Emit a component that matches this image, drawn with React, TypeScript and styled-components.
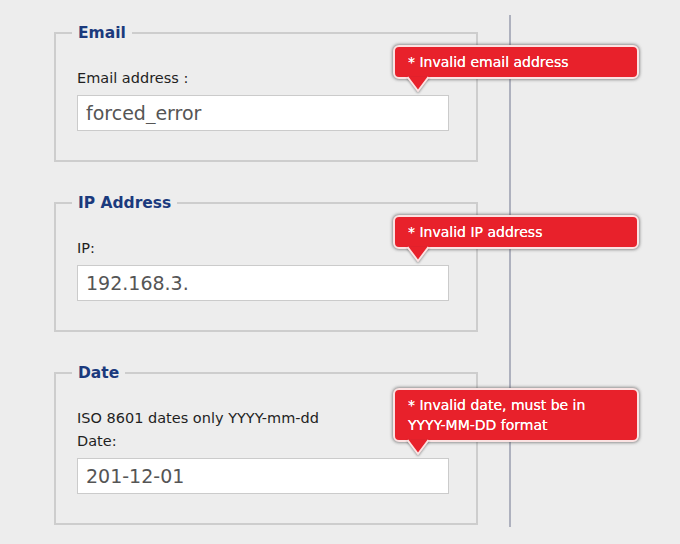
import React from "react";
import styled, { createGlobalStyle } from "styled-components";

const Global = createGlobalStyle`
  html, body { margin: 0; padding: 0; background: #ededed; }
  body { font-family: "DejaVu Sans", Verdana, sans-serif; }
`;

const Page = styled.div`
  display: flex;
  align-items: stretch;
  padding: 15px 0 0 54px;
  width: 680px;
  height: 544px;
  box-sizing: border-box;
  overflow: hidden;
`;

const Column = styled.div`
  display: flex;
  flex-direction: column;
  gap: 33px;
  width: 424px;
  margin: 10px 0 4px;
`;

const Divider = styled.div`
  width: 2px;
  margin-left: 31px;
  height: 512px;
  background: #aeb1be;
`;

const Group = styled.fieldset`
  margin: 0;
  min-width: 0;
  border: 2px solid #cdcdcd;
  padding: 26px 26px 29px 21px;
  position: relative;
`;

const Legend = styled.legend`
  padding: 0 6px;
  margin-left: -5px;
  font-size: 15.5px;
  line-height: 16px;
  font-weight: bold;
  color: #1b3a7d;
`;

const Label = styled.label`
  display: block;
  font-size: 14.5px;
  line-height: 23px;
  color: #1f1f1f;
  margin-bottom: 5px;
`;

const Field = styled.div`
  position: relative;
  width: 372px;
`;

const Input = styled.input`
  display: block;
  width: 100%;
  height: 36px;
  box-sizing: border-box;
  border: 1px solid #cbcbcb;
  background: #ffffff;
  padding: 0 8px;
  font-family: "DejaVu Sans", Verdana, sans-serif;
  font-size: 19px;
  color: #555555;
  outline: none;
`;

const Tip = styled.div`
  position: absolute;
  left: 316px;
  bottom: calc(100% + 16px);
  width: 246px;
  box-sizing: border-box;
  z-index: 2;
  background: #e8212b;
  border: 2px solid #fbe3e3;
  border-radius: 6px;
  box-shadow: 0 0 3px 1px rgba(70, 70, 70, 0.55);
  padding: 5px 8px 5px 13px;
  font-family: "DejaVu Sans", Verdana, sans-serif;
  font-size: 14px;
  line-height: 20px;
  color: #ffffff;
  text-shadow: 0 0 0.6px #ffffff;
`;

const Arrow = styled.svg`
  position: absolute;
  left: 12px;
  top: 100%;
  width: 22px;
  height: 16px;
  overflow: visible;
  filter: drop-shadow(0 1px 1px rgba(60, 60, 60, 0.5));
`;

const TipArrow = () => (
  <Arrow viewBox="0 0 22 16">
    <polygon points="0,0 22,0 11,14" fill="#e8212b" />
    <polyline points="0.5,0 11,14 21.5,0" fill="none" stroke="#fbe3e3" strokeWidth="2" strokeLinejoin="round" />
  </Arrow>
);

type Item = {
  legend: string;
  label: React.ReactNode;
  value: string;
  error: React.ReactNode;
};

const items: Item[] = [
  { legend: "Email", label: "Email address :", value: "forced_error", error: "* Invalid email address" },
  { legend: "IP Address", label: "IP:", value: "192.168.3.", error: "* Invalid IP address" },
  {
    legend: "Date",
    label: (
      <>
        ISO 8601 dates only YYYY-mm-dd
        <br />
        Date:
      </>
    ),
    value: "201-12-01",
    error: (
      <>
        * Invalid date, must be in
        <br />
        YYYY-MM-DD format
      </>
    ),
  },
];

export default function App() {
  return (
    <>
      <Global />
      <Page>
        <Column>
          {items.map((it) => (
            <Group key={it.legend}>
              <Legend>{it.legend}</Legend>
              <Label>{it.label}</Label>
              <Field>
                <Input defaultValue={it.value} readOnly />
                <Tip>
                  {it.error}
                  <TipArrow />
                </Tip>
              </Field>
            </Group>
          ))}
        </Column>
        <Divider />
      </Page>
    </>
  );
}
